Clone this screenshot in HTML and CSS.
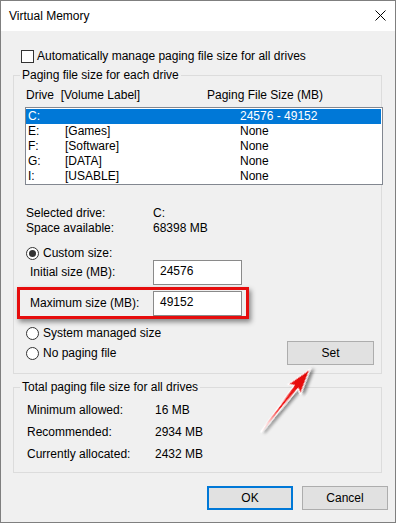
FILE: index.html
```html
<!DOCTYPE html>
<html lang="en">
<head>
    <meta charset="UTF-8">
    <title>Virtual Memory</title>
    <link rel="stylesheet" href="styles.css">
</head>
<body>
<div class="window">
    <div class="titlebar">
        <span class="title">Virtual Memory</span>
        <svg class="close" width="11" height="11" viewBox="0 0 11 11">
            <path d="M0.5 0.5 L10.5 10.5 M10.5 0.5 L0.5 10.5" stroke="#000" stroke-width="1" fill="none"/>
        </svg>
    </div>

    <div class="content">
        <div class="check-row">
            <span class="checkbox"></span>
            <span>Automatically manage paging file size for all drives</span>
        </div>

        <!-- Paging file per drive -->
        <div class="group group-drives">
            <div class="group-title">Paging file size for each drive</div>
            <div class="list-head">
                <span>Drive&nbsp; [Volume Label]</span>
                <span>Paging File Size (MB)</span>
            </div>
            <div class="listbox">
                <div class="list-row selected"><span>C:</span><span></span><span>24576 - 49152</span></div>
                <div class="list-row"><span>E:</span><span>[Games]</span><span>None</span></div>
                <div class="list-row"><span>F:</span><span>[Software]</span><span>None</span></div>
                <div class="list-row"><span>G:</span><span>[DATA]</span><span>None</span></div>
                <div class="list-row"><span>I:</span><span>[USABLE]</span><span>None</span></div>
            </div>

            <div class="info">
                <div class="info-row"><span>Selected drive:</span><span>C:</span></div>
                <div class="info-row"><span>Space available:</span><span>68398 MB</span></div>
            </div>

            <div class="radio-row custom">
                <span class="radio checked"></span>
                <span>Custom size:</span>
            </div>
            <div class="size-row">
                <span class="size-label">Initial size (MB):</span>
                <span class="input">24576</span>
            </div>
            <div class="size-row max">
                <span class="size-label">Maximum size (MB):</span>
                <span class="input">49152</span>
                <span class="highlight"></span>
            </div>
            <div class="radio-row system">
                <span class="radio"></span>
                <span>System managed size</span>
            </div>
            <div class="set-row">
                <div class="radio-row">
                    <span class="radio"></span>
                    <span>No paging file</span>
                </div>
                <button class="btn set-btn">Set</button>
            </div>
        </div>

        <!-- Totals -->
        <div class="group group-total">
            <div class="group-title">Total paging file size for all drives</div>
            <div class="total-row"><span>Minimum allowed:</span><span>16 MB</span></div>
            <div class="total-row"><span>Recommended:</span><span>2934 MB</span></div>
            <div class="total-row"><span>Currently allocated:</span><span>2432 MB</span></div>
        </div>
    </div>

    <div class="footer">
        <button class="btn default">OK</button>
        <button class="btn">Cancel</button>
    </div>

    <svg class="arrow" width="80" height="90" viewBox="0 0 80 90">
        <defs>
            <linearGradient id="arrowFill" x1="0" y1="0" x2="1" y2="0">
                <stop offset="0" stop-color="#ff3a3a"/>
                <stop offset="1" stop-color="#e00000"/>
            </linearGradient>
            <filter id="arrowShadow" x="-30%" y="-30%" width="160%" height="160%">
                <feDropShadow dx="2" dy="3" stdDeviation="1.6" flood-color="#000" flood-opacity="0.45"/>
            </filter>
        </defs>
        <g transform="translate(11 72) rotate(-52.1)" filter="url(#arrowShadow)">
            <polygon points="0,-0.4 57,-2.6 54,-8 80,0 54,8 57,2.6 0,0.4"
                     fill="url(#arrowFill)" stroke="#fff" stroke-width="1.2" stroke-linejoin="round"/>
        </g>
    </svg>
</div>
</body>
</html>
```

FILE: styles.css
```css
body {
    margin: 0;
    padding: 0;
    background: #f0f0f0;
    font-family: "Liberation Sans", Arial, sans-serif;
    font-size: 12px;
    color: #000;
}

.window {
    position: relative;
    width: 396px;
    height: 523px;
    box-sizing: border-box;
    border: 1px solid #7f7f7f;
    background: #f0f0f0;
    line-height: 15px;
}

.titlebar {
    height: 30px;
    background: #fff;
    display: flex;
    align-items: center;
    justify-content: space-between;
    padding: 0 9px 0 8px;
}

.title {
    font-size: 12px;
}

.close {
    display: block;
    margin-top: -1px;
}

.content {
    padding: 0 13px 0 12px;
}

.check-row {
    display: flex;
    align-items: center;
    height: 15px;
    margin-top: 18px;
    padding-left: 8px;
    gap: 3px;
}

.checkbox {
    width: 11px;
    height: 11px;
    border: 1px solid #333;
    background: #fff;
}

/* group boxes */
.group {
    border: 1px solid #dcdcdc;
}

.group-title {
    width: fit-content;
    margin: -8px 0 0 6px;
    padding: 0 2px;
    background: #f0f0f0;
    height: 15px;
}

.group-drives {
    margin-top: 11px;
    padding-bottom: 8px;
}

.list-head {
    display: flex;
    margin-top: 5px;
    padding-left: 12px;
    height: 15px;
}

.list-head span:first-child {
    width: 181px;
}

.listbox {
    margin: 4px -2px 0 11px;
    border: 1px solid #828790;
    background: #fff;
    padding: 1px 1px 0 0;
    height: 75px;
}

.list-row {
    display: grid;
    grid-template-columns: 37px 175px 1fr;
    height: 15px;
    padding-left: 2px;
}

.list-row.selected {
    background: #0078d7;
    color: #fff;
}

.info {
    margin-top: 21px;
    padding-left: 12px;
}

.info-row {
    display: grid;
    grid-template-columns: 127px 1fr;
    height: 15px;
}

.radio-row {
    display: flex;
    align-items: center;
    height: 15px;
    padding-left: 12px;
    gap: 4px;
}

.radio {
    position: relative;
    width: 11px;
    height: 11px;
    border: 1px solid #333;
    border-radius: 50%;
    background: #fff;
}

.radio.checked::after {
    content: "";
    position: absolute;
    left: 2px;
    top: 2px;
    width: 7px;
    height: 7px;
    border-radius: 50%;
    background: #333;
}

.custom {
    margin-top: 10px;
    height: 14px;
}

.size-row {
    position: relative;
    display: flex;
    align-items: center;
    height: 25px;
    padding-left: 16px;
}

.size-row.max {
    margin-top: 6px;
}

.size-label {
    width: 123px;
}

.input {
    box-sizing: border-box;
    width: 89px;
    height: 25px;
    border: 1px solid #8a8a8a;
    background: #fff;
    padding: 3px 0 0 6px;
}

.highlight {
    position: absolute;
    left: 3px;
    top: -4px;
    width: 226px;
    height: 26px;
    border: 3px solid #e60d0d;
    box-shadow: 2px 3px 5px rgba(0, 0, 0, 0.45);
}

.system {
    margin-top: 10px;
}

.set-row {
    display: flex;
    align-items: center;
    justify-content: space-between;
    height: 24px;
    padding-right: 7px;
}

.btn {
    box-sizing: border-box;
    width: 87px;
    height: 24px;
    border: 1px solid #adadad;
    background: #e1e1e1;
    font-family: "Liberation Sans", Arial, sans-serif;
    font-size: 12px;
    color: #000;
    padding: 0;
}

.btn.default {
    border: 2px solid #0078d7;
}

.group-total {
    margin-top: 13px;
    padding-bottom: 7px;
}

.total-row {
    display: grid;
    grid-template-columns: 128px 1fr;
    height: 22px;
    align-items: center;
    padding-left: 13px;
}

.group-total .group-title + .total-row {
    margin-top: 4px;
}

.footer {
    display: flex;
    justify-content: flex-end;
    gap: 9px;
    margin-top: 13px;
    padding-right: 7px;
}

.footer .btn {
    width: 86px;
}

.arrow {
    position: absolute;
    left: 249px;
    top: 359px;
}
```
